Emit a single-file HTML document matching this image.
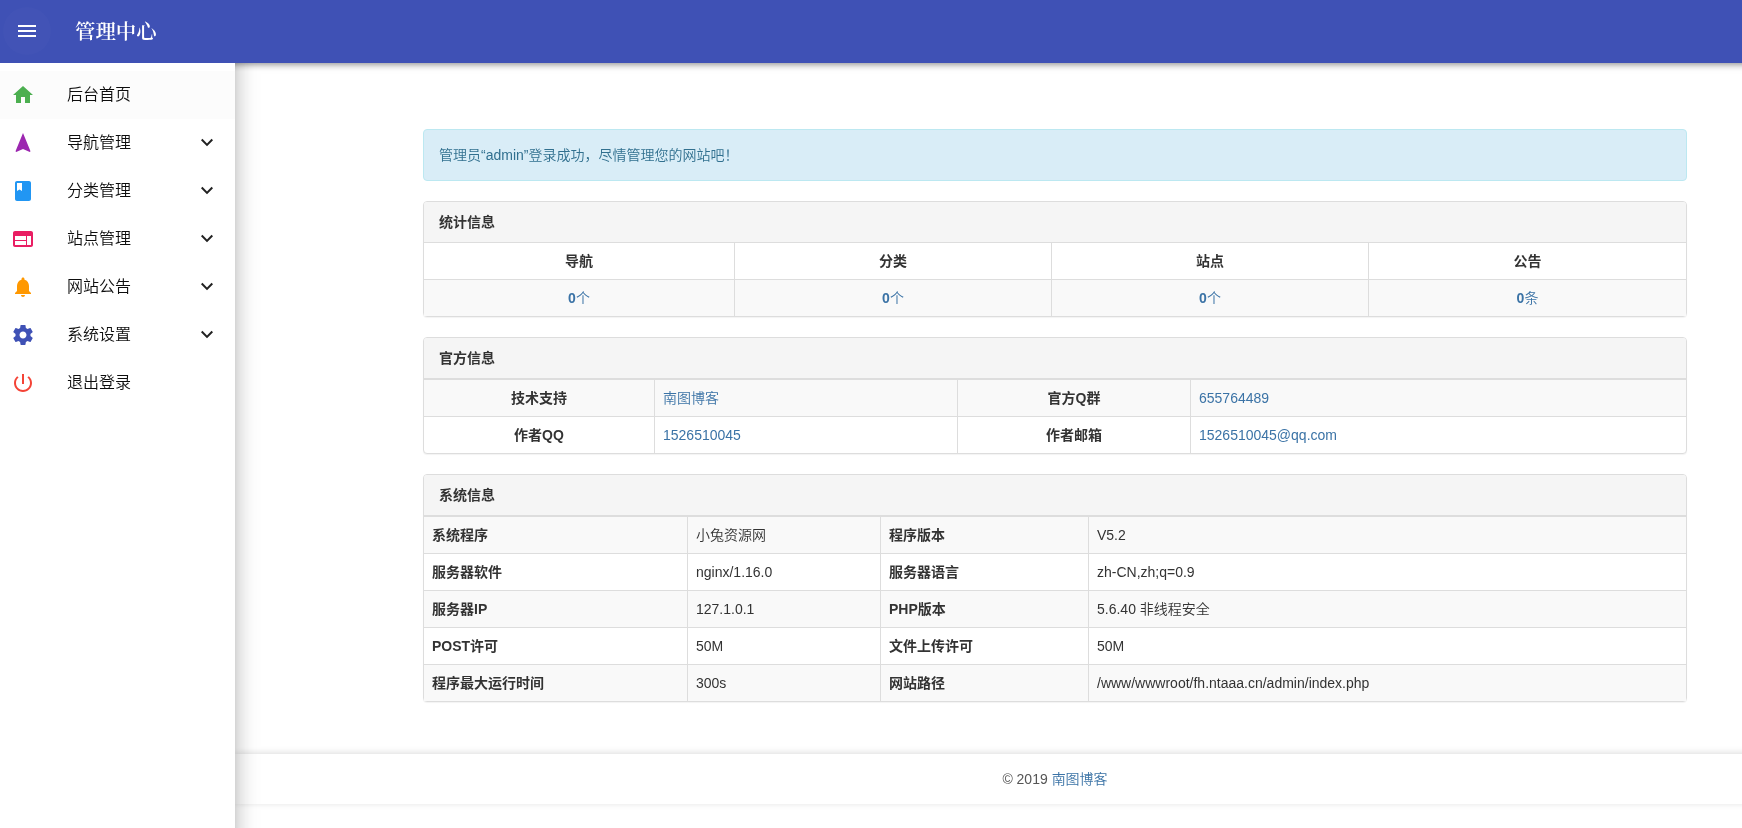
<!DOCTYPE html>
<html lang="zh-CN">
<head>
<meta charset="utf-8">
<title>管理中心</title>
<style>
*{box-sizing:border-box}
html,body{margin:0;padding:0}
body{width:1742px;height:828px;overflow:hidden;background:#fff;position:relative;
  font-family:"Liberation Sans","Noto Sans CJK SC",sans-serif;font-size:14px;font-weight:350;line-height:20px;color:#333}
a{color:#3b73a6;text-decoration:none}
#wrap{position:absolute;left:-5px;top:-1px;width:1880px;height:840px;will-change:transform}
/* appbar */
#appbar{position:absolute;left:0;top:0;width:100%;height:64px;background:#3f51b5;color:#fff;z-index:30;
  box-shadow:0 2px 4px -1px rgba(0,0,0,.2),0 4px 5px 0 rgba(0,0,0,.14),0 1px 10px 0 rgba(0,0,0,.12)}
#menubtn{position:absolute;left:8px;top:8px;width:48px;height:48px;border-radius:50%;background:rgba(255,255,255,.015)}
#menubtn svg{position:absolute;left:12px;top:12px;width:24px;height:24px;fill:#fff}
#title{position:absolute;left:80px;top:1px;height:64px;line-height:64px;font-size:20.4px;font-weight:600;
  font-family:"Liberation Serif","Noto Serif CJK SC",serif;white-space:nowrap}
/* drawer */
#drawer{position:absolute;left:0;top:64px;width:240px;height:780px;background:#fff;z-index:40}
#dshadow{position:absolute;left:0;top:0;width:240px;height:844px;z-index:20;
  box-shadow:0 8px 10px -5px rgba(0,0,0,.2),0 16px 20px 1px rgba(0,0,0,.15),0 6px 24px 3px rgba(0,0,0,.12)}
#drawer ul{list-style:none;margin:0;padding:8px 0}
#drawer li{position:relative;height:48px;line-height:48px;padding:0 16px;font-size:16px;font-weight:350;color:rgba(0,0,0,.95);white-space:nowrap}
#drawer li.active{background:#fcfcfc}
#drawer li svg.ic{position:absolute;left:16px;top:12px;width:24px;height:24px}
#drawer li span{position:absolute;left:72px;top:0}
#drawer li svg.arr{position:absolute;left:200px;top:12px;width:24px;height:24px;fill:rgba(0,0,0,.87)}
/* content */
#content{position:absolute;left:428px;top:130px;width:1264px}
.alert{padding:15px;margin-bottom:20px;border:1px solid #bce8f1;border-radius:4px;background:#d9edf7;color:#31708f}
.panel{margin-bottom:20px;background:#fff;border:1px solid #ddd;border-radius:4px;box-shadow:0 1px 1px rgba(0,0,0,.05)}
.panel-heading{padding:10px 15px;border-bottom:1px solid #ddd;background:#f5f5f5;border-radius:3px 3px 0 0;font-weight:bold;color:#333}
table{width:100%;border-collapse:separate;border-spacing:0;table-layout:fixed}
th,td{padding:8px;line-height:20px;vertical-align:top;text-align:left;border:0 solid #ddd;border-left-width:1px;border-top-width:1px;overflow:hidden;white-space:nowrap}
th{font-weight:bold}
tr>*:first-child{border-left-width:0}
tr:first-child>*{border-top-width:0}
tr.s>*{background:#f9f9f9}
.c th,.c td{text-align:center}
.t2{border-top:1px solid #ddd}
/* footer */
#footer{position:absolute;left:240px;top:755px;width:1640px;height:50px;background:#fff;text-align:center;line-height:51px;color:#555;
  box-shadow:0 -1px 7px rgba(0,0,0,.14)}
</style>
</head>
<body>
<div id="wrap">
  <div id="appbar">
    <div id="menubtn"><svg viewBox="0 0 24 24"><path d="M3 18h18v-2H3v2zm0-5h18v-2H3v2zm0-7v2h18V6H3z"/></svg></div>
    <div id="title">管理中心</div>
  </div>
  <div id="dshadow"></div>
  <div id="drawer">
    <ul>
      <li class="active"><svg class="ic" viewBox="0 0 24 24" fill="#4caf50"><path d="M10 20v-6h4v6h5v-8h3L12 3 2 12h3v8z"/></svg><span>后台首页</span></li>
      <li><svg class="ic" viewBox="0 0 24 24" fill="#9c27b0"><path d="M12 2L4.5 20.29l.71.71L12 18l6.79 3 .71-.71z"/></svg><span>导航管理</span><svg class="arr" viewBox="0 0 24 24"><path d="M7.41 7.84L12 12.42l4.59-4.58L18 9.25l-6 6-6-6z"/></svg></li>
      <li><svg class="ic" viewBox="0 0 24 24" fill="#2196f3"><path d="M18 2H6c-1.1 0-2 .9-2 2v16c0 1.1.9 2 2 2h12c1.1 0 2-.9 2-2V4c0-1.1-.9-2-2-2zM6 4h5v8l-2.500-1.500L6 12V4z"/></svg><span>分类管理</span><svg class="arr" viewBox="0 0 24 24"><path d="M7.41 7.84L12 12.42l4.59-4.58L18 9.25l-6 6-6-6z"/></svg></li>
      <li><svg class="ic" viewBox="0 0 24 24" fill="#e91e63"><path d="M20 4H4c-1.100 0-1.990.9-1.990 2L2 18c0 1.100.9 2 2 2h16c1.100 0 2-.9 2-2V6c0-1.100-.9-2-2-2zm-5 14H4v-4h11v4zm0-5H4V9h11v4zm5 5h-4V9h4v9z"/></svg><span>站点管理</span><svg class="arr" viewBox="0 0 24 24"><path d="M7.41 7.84L12 12.42l4.59-4.58L18 9.25l-6 6-6-6z"/></svg></li>
      <li><svg class="ic" viewBox="0 0 24 24" fill="#ff9800"><path d="M12 22c1.100 0 2-.9 2-2h-4c0 1.100.89 2 2 2zm6-6v-5c0-3.070-1.640-5.640-4.500-6.320V4c0-.83-.67-1.500-1.500-1.500s-1.500.67-1.500 1.500v.68C7.630 5.360 6 7.920 6 11v5l-2 2v1h16v-1l-2-2z"/></svg><span>网站公告</span><svg class="arr" viewBox="0 0 24 24"><path d="M7.41 7.84L12 12.42l4.59-4.58L18 9.25l-6 6-6-6z"/></svg></li>
      <li><svg class="ic" viewBox="0 0 24 24" fill="#3f51b5"><path d="M19.430 12.980c.04-.32.07-.64.07-.98s-.03-.66-.07-.98l2.110-1.650c.19-.15.24-.42.12-.64l-2-3.460c-.12-.22-.39-.3-.61-.22l-2.490 1c-.52-.4-1.080-.73-1.690-.98l-.38-2.650C14.460 2.180 14.250 2 14 2h-4c-.25 0-.46.18-.49.42l-.38 2.650c-.61.25-1.170.59-1.690.98l-2.490-1c-.23-.09-.49 0-.61.22l-2 3.460c-.13.22-.07.49.12.64l2.110 1.650c-.04.32-.07.65-.07.98s.03.66.07.98l-2.110 1.650c-.19.15-.24.42-.12.64l2 3.460c.12.22.39.3.61.22l2.490-1c.52.4 1.080.73 1.690.98l.38 2.650c.03.24.24.42.49.42h4c.25 0 .46-.18.49-.42l.38-2.650c.61-.25 1.170-.59 1.690-.98l2.490 1c.23.09.49 0 .61-.22l2-3.460c.12-.22.07-.49-.12-.64l-2.110-1.650zM12 15.500c-1.930 0-3.500-1.570-3.500-3.500s1.570-3.500 3.500-3.500 3.500 1.570 3.500 3.500-1.570 3.500-3.500 3.500z"/></svg><span>系统设置</span><svg class="arr" viewBox="0 0 24 24"><path d="M7.41 7.84L12 12.42l4.59-4.58L18 9.25l-6 6-6-6z"/></svg></li>
      <li><svg class="ic" viewBox="0 0 24 24" fill="#f44336"><path d="M13 3h-2v10h2V3zm4.830 2.170l-1.420 1.420C17.990 7.860 19 9.810 19 12c0 3.870-3.130 7-7 7s-7-3.130-7-7c0-2.190 1.010-4.140 2.580-5.420L6.170 5.170C4.230 6.820 3 9.260 3 12c0 4.970 4.030 9 9 9s9-4.030 9-9c0-2.740-1.230-5.180-3.170-6.830z"/></svg><span>退出登录</span></li>
    </ul>
  </div>

  <div id="content">
    <div class="alert">管理员“admin”登录成功，尽情管理您的网站吧！</div>

    <div class="panel">
      <div class="panel-heading">统计信息</div>
      <table class="c">
        <tr><th style="width:310px">导航</th><th style="width:317px">分类</th><th style="width:317px">站点</th><th>公告</th></tr>
        <tr class="s"><td><a><b>0</b>个</a></td><td><a><b>0</b>个</a></td><td><a><b>0</b>个</a></td><td><a><b>0</b>条</a></td></tr>
      </table>
    </div>

    <div class="panel">
      <div class="panel-heading">官方信息</div>
      <table class="t2">
        <tr class="s"><th style="width:230px;text-align:center">技术支持</th><td style="width:303px"><a>南图博客</a></td><th style="width:233px;text-align:center">官方Q群</th><td><a>655764489</a></td></tr>
        <tr><th style="text-align:center">作者QQ</th><td><a>1526510045</a></td><th style="text-align:center">作者邮箱</th><td><a>1526510045@qq.com</a></td></tr>
      </table>
    </div>

    <div class="panel">
      <div class="panel-heading">系统信息</div>
      <table class="t2">
        <tr class="s"><th style="width:263px">系统程序</th><td style="width:193px">小兔资源网</td><th style="width:208px">程序版本</th><td>V5.2</td></tr>
        <tr><th>服务器软件</th><td>nginx/1.16.0</td><th>服务器语言</th><td>zh-CN,zh;q=0.9</td></tr>
        <tr class="s"><th>服务器IP</th><td>127.1.0.1</td><th>PHP版本</th><td>5.6.40 非线程安全</td></tr>
        <tr><th>POST许可</th><td>50M</td><th>文件上传许可</th><td>50M</td></tr>
        <tr class="s"><th>程序最大运行时间</th><td>300s</td><th>网站路径</th><td>/www/wwwroot/fh.ntaaa.cn/admin/index.php</td></tr>
      </table>
    </div>
  </div>

  <div id="footer">© 2019 <a>南图博客</a></div>
</div>
</body>
</html>
